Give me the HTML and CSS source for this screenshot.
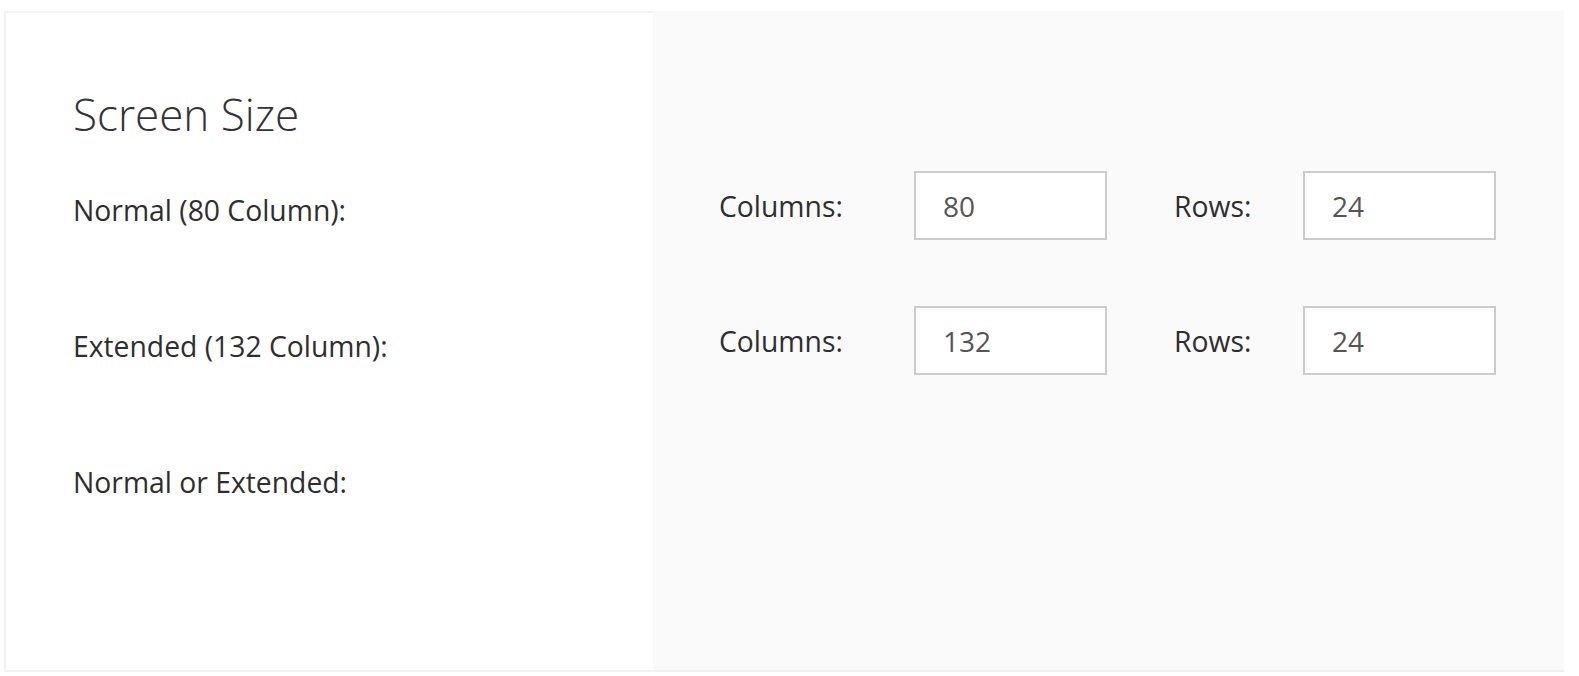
FILE: index.html
```html
<!DOCTYPE html>
<html lang="en">
<head>
<meta charset="utf-8">
<title>Screen Size</title>
<link rel="stylesheet" href="styles.css">
</head>
<body>
<div class="card">
  <div class="left">
    <h2 class="title">Screen Size</h2>
    <div class="label">Normal (80 Column):</div>
    <div class="label">Extended (132 Column):</div>
    <div class="label">Normal or Extended:</div>
  </div>
  <div class="right">
    <div class="row">
      <span class="field-label cols">Columns:</span>
      <input class="field" type="text" value="80">
      <span class="field-label rows">Rows:</span>
      <input class="field" type="text" value="24">
    </div>
    <div class="row">
      <span class="field-label cols">Columns:</span>
      <input class="field" type="text" value="132">
      <span class="field-label rows">Rows:</span>
      <input class="field" type="text" value="24">
    </div>
  </div>
</div>
</body>
</html>
```

FILE: styles.css
```css
html, body {
  margin: 0;
  padding: 0;
  background: #ffffff;
}

body {
  font-family: "Open Sans", "Noto Sans", sans-serif;
  color: #333333;
}

.card {
  display: grid;
  grid-template-columns: 649px 911px;
  margin: 11px 0 0 4px;
  height: 661px;
}

.left {
  background: #ffffff;
  border: 2px solid #f2f2f2;
  border-right: none;
  padding: 75px 0 0 67px;
}

.title {
  margin: 0;
  font-size: 44px;
  font-weight: 300;
  line-height: 53px;
  color: #333333;
}

.label {
  font-size: 28.3px;
  line-height: 40px;
  margin-top: 96px;
  color: #2e2e2e;
}

.title + .label {
  margin-top: 49px;
}

.right {
  background: #fafafa;
  border-bottom: 2px solid #f0f0f0;
  padding: 160px 0 0 66px;
}

.row {
  display: flex;
  align-items: center;
  height: 69px;
  margin-bottom: 66px;
}

.field-label {
  font-size: 28.3px;
  line-height: 40px;
  color: #2e2e2e;
}

.cols {
  width: 195px;
}

.rows {
  width: 129px;
  margin-left: 67px;
}

.field {
  box-sizing: border-box;
  width: 193px;
  height: 69px;
  border: 2px solid #cccccc;
  background: #ffffff;
  padding: 0 0 0 27px;
  font-family: "Open Sans", "Noto Sans", sans-serif;
  font-size: 28px;
  color: #555555;
  outline: none;
  margin: 0;
}
```
